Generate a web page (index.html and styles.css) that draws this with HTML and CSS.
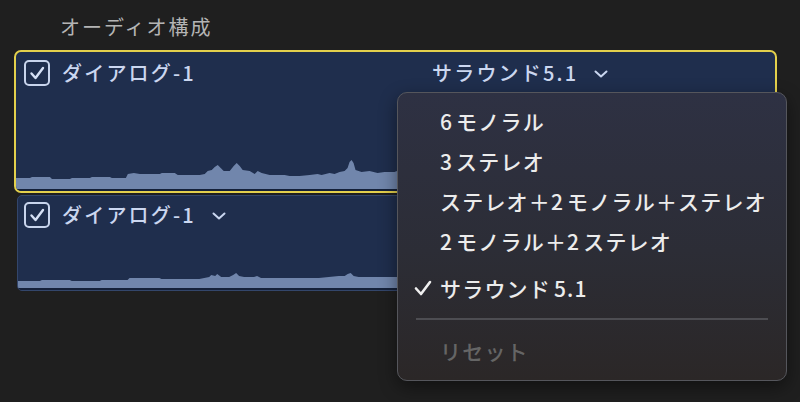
FILE: index.html
```html
<!DOCTYPE html>
<html lang="ja">
<head>
    <meta charset="UTF-8">
    <meta name="viewport" content="width=device-width, initial-scale=1.0">
    <title>オーディオ構成</title>
    <link rel="stylesheet" href="styles.css">
</head>
<body>
    <div class="panel">
        <h1 class="panel-title">オーディオ構成</h1>

        <div class="track track-selected">
            <div class="track-header">
                <div class="track-name">
                    <span class="checkbox">
                        <svg viewBox="0 0 26 26" width="26" height="26"><path d="M7.5 13.5 L11.5 18 L19 8" fill="none" stroke="#d6e0f5" stroke-width="2.4" stroke-linecap="round" stroke-linejoin="round"/></svg>
                    </span>
                    <span>ダイアログ-1</span>
                </div>
                <div class="track-config">
                    <span>サラウンド5.1</span>
                    <svg class="chevron" viewBox="0 0 14 8" width="14" height="8"><path d="M1.5 1.5 L7 6.5 L12.5 1.5" fill="none" stroke="#c9d6f0" stroke-width="2" stroke-linecap="round" stroke-linejoin="round"/></svg>
                </div>
            </div>
            <svg class="wave wave-large" viewBox="16 155 760 34" preserveAspectRatio="none">
                <path fill="#7186ac" d="M16 189 L16 178 L30 178 L32 177 L50 177 L52 179 L70 179 L72 178 L90 178 L92 177 L110 177 L112 178 L126 178 L128 174 L134 173 L140 174 L160 174 L162 173 L175 173 L178 175 L200 175 L205 174 L208 171 L212 170 L215 167 L218 165 L221 168 L224 171 L230 171 L234 166 L237 163 L240 166 L243 170 L250 171 L255 174 L258 171 L262 173 L270 175 L285 175 L290 176 L300 176 L310 175 L318 174 L322 175 L330 173 L335 174 L340 172 L345 171 L348 168 L350 162 L352 160 L354 163 L356 170 L362 172 L370 171 L378 173 L385 172 L395 172 L400 170 L430 172 L470 170 L520 173 L560 171 L620 172 L680 174 L740 172 L776 173 L776 189 Z"/>
            </svg>
        </div>

        <div class="track">
            <div class="track-header">
                <div class="track-name">
                    <span class="checkbox">
                        <svg viewBox="0 0 26 26" width="26" height="26"><path d="M7.5 13.5 L11.5 18 L19 8" fill="none" stroke="#d6e0f5" stroke-width="2.4" stroke-linecap="round" stroke-linejoin="round"/></svg>
                    </span>
                    <span>ダイアログ-1</span>
                    <svg class="chevron" viewBox="0 0 14 8" width="14" height="8"><path d="M1.5 1.5 L7 6.5 L12.5 1.5" fill="none" stroke="#c9d6f0" stroke-width="2" stroke-linecap="round" stroke-linejoin="round"/></svg>
                </div>
            </div>
            <svg class="wave wave-small" viewBox="18 265 758 22" preserveAspectRatio="none">
                <path fill="#7186ac" d="M18 287 L18 280 L40 280 L42 279 L70 279 L72 280 L100 280 L102 279 L128 279 L130 277 L160 277 L162 278 L200 278 L210 276 L212 274 L216 275 L218 273 L222 276 L230 276 L234 274 L237 272 L240 275 L245 276 L255 276 L258 275 L262 277 L300 277 L320 277 L330 276 L340 275 L346 275 L349 273 L352 272 L355 275 L360 276 L380 276 L395 276 L500 276 L600 277 L776 276 L776 287 Z"/>
            </svg>
        </div>
    </div>

    <div class="menu">
        <div class="menu-item">6 モノラル</div>
        <div class="menu-item">3 ステレオ</div>
        <div class="menu-item">ステレオ＋2 モノラル＋ステレオ</div>
        <div class="menu-item">2 モノラル＋2 ステレオ</div>
        <div class="menu-item menu-item-checked">
            <svg class="menu-check" viewBox="0 0 18 16" width="18" height="16"><path d="M2 8.5 L7 14 L16 2" fill="none" stroke="#efefef" stroke-width="2.6" stroke-linecap="round" stroke-linejoin="round"/></svg>
            サラウンド 5.1
        </div>
        <div class="menu-separator"></div>
        <div class="menu-item menu-item-disabled">リセット</div>
    </div>
</body>
</html>
```

FILE: styles.css
```css
body {
    margin: 0;
    padding: 0;
    width: 800px;
    height: 402px;
    overflow: hidden;
    background: #1f1f1f;
    font-family: "Noto Sans CJK JP", "Noto Sans", sans-serif;
    position: relative;
}

.panel {
    padding: 15px 23px 0 14px;
    box-sizing: border-box;
    border-left: 10px solid #1a1a1a;
    margin-left: -10px;
}

.panel-title {
    margin: 0 0 11px 46px;
    font-size: 20px;
    line-height: 24px;
    font-weight: 400;
    color: #b4b4b4;
    letter-spacing: 2px;
}

.track {
    display: flex;
    flex-direction: column;
    justify-content: space-between;
    background: #1f2e4d;
    box-sizing: border-box;
}

.track-selected {
    height: 143px;
    border: 2px solid #e3d04c;
    border-radius: 7px;
    padding-top: 8px;
    overflow: hidden;
}

.track:not(.track-selected) {
    height: 96px;
    margin: 2px 3px 0 3px;
    border: 1px solid #33466b;
    border-radius: 5px;
    padding-top: 6px;
    overflow: hidden;
}

.track-header {
    display: grid;
    grid-template-columns: 408px auto;
    padding-left: 8px;
    color: #cbd7f0;
    font-size: 20px;
    line-height: 26px;
    font-weight: 500;
    letter-spacing: 2.2px;
}

.track:not(.track-selected) .track-header {
    padding-left: 6px;
}

.track-name,
.track-config {
    display: flex;
    align-items: center;
}

.checkbox {
    width: 26px;
    height: 26px;
    box-sizing: border-box;
    border: 2px solid #c8d4ec;
    border-radius: 5px;
    margin-right: 12px;
    display: flex;
    align-items: center;
    justify-content: center;
}

.checkbox svg {
    flex: none;
}

.chevron {
    margin-left: 16px;
    margin-top: 2px;
}

.wave {
    display: block;
    width: 100%;
    border-bottom: 2px solid #15213a;
}

.wave-large {
    height: 34px;
}

.wave-small {
    height: 22px;
}

.menu {
    position: absolute;
    left: 397px;
    top: 92px;
    width: 390px;
    height: 289px;
    box-sizing: border-box;
    padding: 8px 0 0 0;
    border: 1px solid #55565c;
    border-radius: 10px;
    background: linear-gradient(180deg, #2e3143 0%, #2c2d36 55%, #2b2727 100%);
    box-shadow: 0 6px 18px rgba(0, 0, 0, 0.45);
}

.menu-item {
    position: relative;
    height: 40px;
    line-height: 40px;
    padding-left: 42px;
    font-size: 21px;
    font-weight: 500;
    color: #ececec;
    white-space: nowrap;
    letter-spacing: 1.2px;
    word-spacing: -3px;
}

.menu-item-checked {
    margin-top: 7px;
}

.menu-check {
    position: absolute;
    left: 16px;
    top: 12px;
}

.menu-separator {
    height: 2px;
    margin: 10px 18px 11px 18px;
    background: #4d4d52;
}

.menu-item-disabled {
    color: #656565;
}
```
